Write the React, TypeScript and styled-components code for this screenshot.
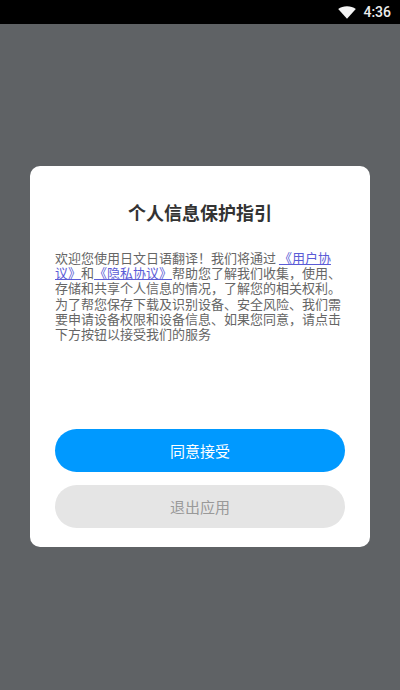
import React from "react";
import styled, { createGlobalStyle } from "styled-components";

const GlobalStyle = createGlobalStyle`
  html, body {
    margin: 0;
    padding: 0;
    background: #5f6265;
  }
`;

const WifiIcon: React.FC = () => (
  <svg width="18" height="13" viewBox="0 0 18 13">
    <path d="M0.2 3C2.6 1.1 5.6 0.2 9 0.2s6.4 0.9 8.8 2.8L9 12.8z" fill="#f4f4f4" />
  </svg>
);

const App: React.FC = () => {
  return (
    <Screen>
      <GlobalStyle />
      <StatusBar>
        <WifiIcon />
        <Clock>4:36</Clock>
      </StatusBar>
      <Overlay>
        <Dialog>
          <Title>个人信息保护指引</Title>
          <Body>
            欢迎您使用日文日语翻译！我们将通过{" "}
            <Link>《用户协议》</Link>和<Link>《隐私协议》</Link>
            帮助您了解我们收集，使用、存储和共享个人信息的情况，了解您的相关权利。为了帮您保存下载及识别设备、安全风险、我们需要申请设备权限和设备信息、如果您同意，请点击下方按钮以接受我们的服务
          </Body>
          <Actions>
            <PillButton $primary>同意接受</PillButton>
            <PillButton>退出应用</PillButton>
          </Actions>
        </Dialog>
      </Overlay>
    </Screen>
  );
};

export default App;

const Screen = styled.div`
  width: 400px;
  height: 690px;
  display: flex;
  flex-direction: column;
  overflow: hidden;
  background-color: #5f6265;
  font-family: "Noto Sans CJK SC", "Liberation Sans", sans-serif;
`;

const StatusBar = styled.div`
  height: 24px;
  flex-shrink: 0;
  display: flex;
  align-items: center;
  justify-content: flex-end;
  gap: 7px;
  padding-right: 9px;
  background-color: #000;
`;

const Clock = styled.span`
  font-family: Roboto, "Liberation Sans", sans-serif;
  font-size: 14px;
  font-weight: 500;
  color: #ececec;
`;

const Overlay = styled.div`
  padding: 142px 30px 0;
`;

const Dialog = styled.div`
  box-sizing: border-box;
  width: 340px;
  height: 381px;
  padding: 34px 25px 19px;
  display: flex;
  flex-direction: column;
  border-radius: 10px;
  background-color: #fff;
`;

const Title = styled.div`
  height: 24px;
  line-height: 24px;
  text-align: center;
  font-size: 18px;
  font-weight: 700;
  color: #333;
`;

const Body = styled.p`
  margin: 26px 0 0;
  font-size: 13px;
  line-height: 15.2px;
  color: #666;
  word-break: break-all;
`;

const Link = styled.span`
  color: #5b5bd6;
  text-decoration: underline;
`;

const Actions = styled.div`
  margin-top: auto;
  display: flex;
  flex-direction: column;
  gap: 13px;
`;

const PillButton = styled.div<{ $primary?: boolean }>`
  height: 43px;
  line-height: 43px;
  text-align: center;
  border-radius: 22px;
  font-size: 15px;
  color: ${(p) => (p.$primary ? "#fff" : "#999")};
  background-color: ${(p) => (p.$primary ? "#0099ff" : "#e5e5e5")};
`;
